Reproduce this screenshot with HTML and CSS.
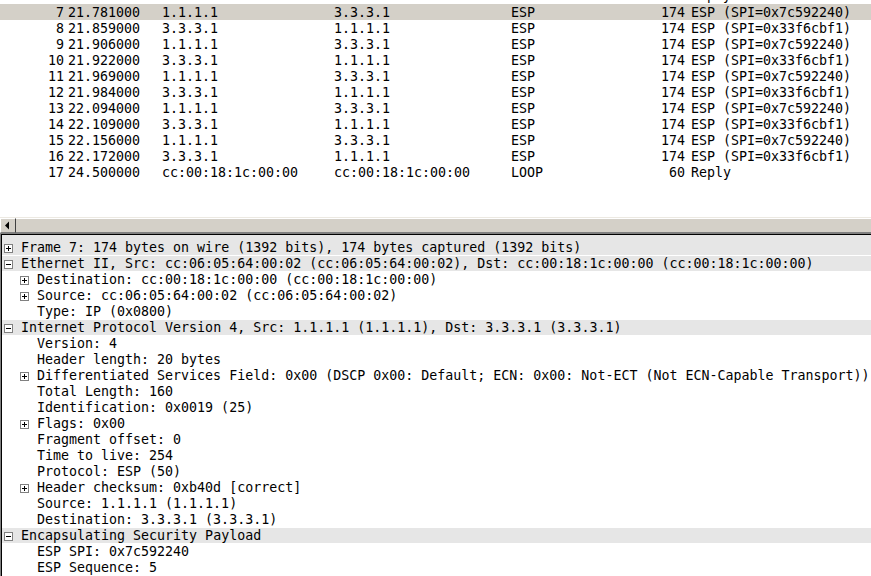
FILE: index.html
```html
<!DOCTYPE html>
<html lang="en">
<head>
    <meta charset="UTF-8">
    <title>Packet capture</title>
    <link rel="stylesheet" href="styles.css">
</head>
<body>

    <div class="packet-list">
        <div class="pkt partial"><span class="no"></span><span></span><span></span><span></span><span></span><span class="len"></span><span>Reply</span></div>
        <div class="pkt selected"><span class="no">7</span><span>21.781000</span><span>1.1.1.1</span><span>3.3.3.1</span><span>ESP</span><span class="len">174</span><span>ESP (SPI=0x7c592240)</span></div>
        <div class="pkt"><span class="no">8</span><span>21.859000</span><span>3.3.3.1</span><span>1.1.1.1</span><span>ESP</span><span class="len">174</span><span>ESP (SPI=0x33f6cbf1)</span></div>
        <div class="pkt"><span class="no">9</span><span>21.906000</span><span>1.1.1.1</span><span>3.3.3.1</span><span>ESP</span><span class="len">174</span><span>ESP (SPI=0x7c592240)</span></div>
        <div class="pkt"><span class="no">10</span><span>21.922000</span><span>3.3.3.1</span><span>1.1.1.1</span><span>ESP</span><span class="len">174</span><span>ESP (SPI=0x33f6cbf1)</span></div>
        <div class="pkt"><span class="no">11</span><span>21.969000</span><span>1.1.1.1</span><span>3.3.3.1</span><span>ESP</span><span class="len">174</span><span>ESP (SPI=0x7c592240)</span></div>
        <div class="pkt"><span class="no">12</span><span>21.984000</span><span>3.3.3.1</span><span>1.1.1.1</span><span>ESP</span><span class="len">174</span><span>ESP (SPI=0x33f6cbf1)</span></div>
        <div class="pkt"><span class="no">13</span><span>22.094000</span><span>1.1.1.1</span><span>3.3.3.1</span><span>ESP</span><span class="len">174</span><span>ESP (SPI=0x7c592240)</span></div>
        <div class="pkt"><span class="no">14</span><span>22.109000</span><span>3.3.3.1</span><span>1.1.1.1</span><span>ESP</span><span class="len">174</span><span>ESP (SPI=0x33f6cbf1)</span></div>
        <div class="pkt"><span class="no">15</span><span>22.156000</span><span>1.1.1.1</span><span>3.3.3.1</span><span>ESP</span><span class="len">174</span><span>ESP (SPI=0x7c592240)</span></div>
        <div class="pkt"><span class="no">16</span><span>22.172000</span><span>3.3.3.1</span><span>1.1.1.1</span><span>ESP</span><span class="len">174</span><span>ESP (SPI=0x33f6cbf1)</span></div>
        <div class="pkt"><span class="no">17</span><span>24.500000</span><span>cc:00:18:1c:00:00</span><span>cc:00:18:1c:00:00</span><span>LOOP</span><span class="len">60</span><span>Reply</span></div>
    </div>

    <div class="hscroll">
        <div class="arrow-btn"><svg width="14" height="13" viewBox="0 0 14 13"><path d="M4 6.5 L8 2.5 L8 10.5 Z" fill="#000"/></svg></div>
        <div class="thumb"></div>
    </div>

    <div class="tree">
        <div class="node top"><span class="exp"><svg width="9" height="9" viewBox="0 0 9 9"><rect x="0.5" y="0.5" width="8" height="8" fill="#fff" stroke="#808080"/><path d="M2 4.5H7M4.5 2V7" stroke="#000"/></svg></span>Frame 7: 174 bytes on wire (1392 bits), 174 bytes captured (1392 bits)</div>
        <div class="node top"><span class="exp"><svg width="9" height="9" viewBox="0 0 9 9"><rect x="0.5" y="0.5" width="8" height="8" fill="#fff" stroke="#808080"/><path d="M2 4.5H7" stroke="#000"/></svg></span>Ethernet II, Src: cc:06:05:64:00:02 (cc:06:05:64:00:02), Dst: cc:00:18:1c:00:00 (cc:00:18:1c:00:00)</div>
        <div class="node child"><span class="exp"><svg width="9" height="9" viewBox="0 0 9 9"><rect x="0.5" y="0.5" width="8" height="8" fill="#fff" stroke="#808080"/><path d="M2 4.5H7M4.5 2V7" stroke="#000"/></svg></span>Destination: cc:00:18:1c:00:00 (cc:00:18:1c:00:00)</div>
        <div class="node child"><span class="exp"><svg width="9" height="9" viewBox="0 0 9 9"><rect x="0.5" y="0.5" width="8" height="8" fill="#fff" stroke="#808080"/><path d="M2 4.5H7M4.5 2V7" stroke="#000"/></svg></span>Source: cc:06:05:64:00:02 (cc:06:05:64:00:02)</div>
        <div class="node child"><span class="exp"></span>Type: IP (0x0800)</div>
        <div class="node top"><span class="exp"><svg width="9" height="9" viewBox="0 0 9 9"><rect x="0.5" y="0.5" width="8" height="8" fill="#fff" stroke="#808080"/><path d="M2 4.5H7" stroke="#000"/></svg></span>Internet Protocol Version 4, Src: 1.1.1.1 (1.1.1.1), Dst: 3.3.3.1 (3.3.3.1)</div>
        <div class="node child"><span class="exp"></span>Version: 4</div>
        <div class="node child"><span class="exp"></span>Header length: 20 bytes</div>
        <div class="node child"><span class="exp"><svg width="9" height="9" viewBox="0 0 9 9"><rect x="0.5" y="0.5" width="8" height="8" fill="#fff" stroke="#808080"/><path d="M2 4.5H7M4.5 2V7" stroke="#000"/></svg></span>Differentiated Services Field: 0x00 (DSCP 0x00: Default; ECN: 0x00: Not-ECT (Not ECN-Capable Transport))</div>
        <div class="node child"><span class="exp"></span>Total Length: 160</div>
        <div class="node child"><span class="exp"></span>Identification: 0x0019 (25)</div>
        <div class="node child"><span class="exp"><svg width="9" height="9" viewBox="0 0 9 9"><rect x="0.5" y="0.5" width="8" height="8" fill="#fff" stroke="#808080"/><path d="M2 4.5H7M4.5 2V7" stroke="#000"/></svg></span>Flags: 0x00</div>
        <div class="node child"><span class="exp"></span>Fragment offset: 0</div>
        <div class="node child"><span class="exp"></span>Time to live: 254</div>
        <div class="node child"><span class="exp"></span>Protocol: ESP (50)</div>
        <div class="node child"><span class="exp"><svg width="9" height="9" viewBox="0 0 9 9"><rect x="0.5" y="0.5" width="8" height="8" fill="#fff" stroke="#808080"/><path d="M2 4.5H7M4.5 2V7" stroke="#000"/></svg></span>Header checksum: 0xb40d [correct]</div>
        <div class="node child"><span class="exp"></span>Source: 1.1.1.1 (1.1.1.1)</div>
        <div class="node child"><span class="exp"></span>Destination: 3.3.3.1 (3.3.3.1)</div>
        <div class="node top"><span class="exp"><svg width="9" height="9" viewBox="0 0 9 9"><rect x="0.5" y="0.5" width="8" height="8" fill="#fff" stroke="#808080"/><path d="M2 4.5H7" stroke="#000"/></svg></span>Encapsulating Security Payload</div>
        <div class="node child"><span class="exp"></span>ESP SPI: 0x7c592240</div>
        <div class="node child"><span class="exp"></span>ESP Sequence: 5</div>
    </div>

</body>
</html>
```

FILE: styles.css
```css
* { margin: 0; padding: 0; box-sizing: border-box; }
body {
    font-family: "DejaVu Sans Mono", "Liberation Mono", monospace;
    font-size: 13.3px;
    color: #000;
    background: #fff;
    width: 871px;
    height: 576px;
    overflow: hidden;
}

/* packet list */
.packet-list { height: 217px; overflow: hidden; background: #fff; }
.pkt {
    display: grid;
    grid-template-columns: 68px 94px 172px 177px 100px 80px 1fr;
    height: 16px;
    padding-top: 1px;
    line-height: 16px;
    white-space: nowrap;
}
.pkt.partial { margin-top: -12px; padding-top: 0; }
.pkt.selected { background: #d4d0c8; }
.pkt .no { text-align: right; padding-right: 4px; }
.pkt .len { text-align: right; padding-right: 6px; }

/* horizontal scrollbar */
.hscroll {
    display: flex;
    height: 16px;
    background: #d4d0c8;
    border-top: 1px solid #ece9e2;
}
.arrow-btn {
    width: 16px;
    height: 15px;
    border-top: 1px solid #fff;
    border-left: 1px solid #fff;
    border-right: 1px solid #404040;
    border-bottom: 1px solid #808080;
}
.arrow-btn svg { display: block; }
.thumb { flex: 1; border-top: 1px solid #fff; border-bottom: 1px solid #808080; }

/* details tree */
.tree {
    border-top: 1px solid #808080;
    border-left: 1px solid #808080;
    box-shadow: inset 1px 1px 0 #000;
    padding-left: 1px;
    padding-top: 1px;
    height: 343px;
    overflow: hidden;
}
.node {
    display: flex;
    align-items: flex-start;
    height: 16px;
    padding-top: 1px;
    line-height: 16px;
    white-space: nowrap;
}
.node.top { background: #e6e6e6; box-shadow: inset 0 1px 0 #fff; }
.node.top:first-child { height: 20px; padding-top: 5px; box-shadow: none; }
.node.child { padding-left: 16px; }
.exp { width: 19px; height: 15px; padding: 4px 0 0 2px; flex: none; }
.exp svg { display: block; }
```
